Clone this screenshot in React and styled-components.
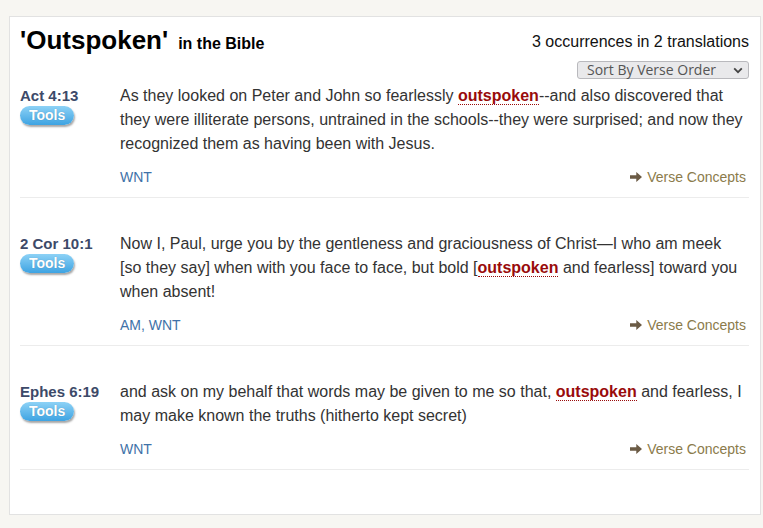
import React from "react";
import styled, { createGlobalStyle } from "styled-components";

const GlobalStyle = createGlobalStyle`
  html, body {
    margin: 0;
    padding: 0;
    background: #f7f6f2;
    font-family: "Liberation Sans", Arial, sans-serif;
  }
`;

const verses = [
  {
    ref: "Act 4:13",
    before: "As they looked on Peter and John so fearlessly ",
    after:
      "--and also discovered that they were illiterate persons, untrained in the schools--they were surprised; and now they recognized them as having been with Jesus.",
    translations: "WNT",
  },
  {
    ref: "2 Cor 10:1",
    before:
      "Now I, Paul, urge you by the gentleness and graciousness of Christ\u2014I who am meek [so they say] when with you face to face, but bold [",
    after: " and fearless] toward you when absent!",
    translations: "AM, WNT",
  },
  {
    ref: "Ephes 6:19",
    before: "and ask on my behalf that words may be given to me so that, ",
    after:
      " and fearless, I may make known the truths (hitherto kept secret)",
    translations: "WNT",
  },
];

const ArrowIcon = () => (
  <svg width="12" height="10" viewBox="0 0 12 10">
    <path d="M0 3.2h6.3V0L12 5 6.3 10V6.8H0z" fill="#6b5b45" />
  </svg>
);

const Chevron = () => (
  <svg width="10" height="7" viewBox="0 0 10 7">
    <path
      d="M1.2 1.4L5 5.2l3.8-3.8"
      fill="none"
      stroke="#444"
      strokeWidth="1.8"
    />
  </svg>
);

export default function App() {
  return (
    <Page>
      <GlobalStyle />
      <Card>
        <Header>
          <Title>
            'Outspoken'<Sub>in the Bible</Sub>
          </Title>
          <Meta>
            <Count>3 occurrences in 2 translations</Count>
            <Select>
              <span>Sort By Verse Order</span>
              <Chevron />
            </Select>
          </Meta>
        </Header>

        {verses.map((v, i) => (
          <Row key={v.ref} $first={i === 0}>
            <RefCol>
              <RefLabel>{v.ref}</RefLabel>
              <ToolsButton>Tools</ToolsButton>
            </RefCol>
            <Body>
              <VerseText>
                {v.before}
                <Hit>outspoken</Hit>
                {v.after}
              </VerseText>
              <Footer>
                <Translations>{v.translations}</Translations>
                <Concepts>
                  <ArrowIcon />
                  Verse Concepts
                </Concepts>
              </Footer>
            </Body>
          </Row>
        ))}
      </Card>
    </Page>
  );
}

const Page = styled.div`
  padding: 16px 2px 13px 9px;
`;

const Card = styled.div`
  background: #fff;
  border: 1px solid #e2e2e2;
  padding: 8px 11px 44px 10px;
`;

const Header = styled.div`
  display: flex;
  justify-content: space-between;
  align-items: flex-start;
`;

const Title = styled.h1`
  margin: 0;
  font-size: 26px;
  line-height: 30px;
  font-weight: bold;
  color: #000;
`;

const Sub = styled.span`
  font-size: 16px;
  margin-left: 10px;
`;

const Meta = styled.div`
  display: flex;
  flex-direction: column;
  align-items: flex-end;
  margin-top: 7px;
`;

const Count = styled.div`
  font-size: 16px;
  line-height: 20px;
  color: #111;
`;

const Select = styled.div`
  margin-top: 9px;
  width: 172px;
  height: 18px;
  box-sizing: border-box;
  display: flex;
  align-items: center;
  justify-content: space-between;
  padding: 0 5px 0 9px;
  background: #e9e9eb;
  border: 1px solid #b9b9bd;
  border-radius: 3px;
  font-family: "Open Sans", "Noto Sans", sans-serif;
  font-size: 14px;
  line-height: 16px;
  color: #555;
`;

const Row = styled.div`
  display: grid;
  grid-template-columns: 100px 1fr;
  padding: ${(p) => (p.$first ? "5px" : "34px")} 0 10px;
  border-bottom: 1px solid #ececec;
`;

const RefCol = styled.div`
  display: flex;
  flex-direction: column;
  align-items: flex-start;
`;

const RefLabel = styled.div`
  margin-top: 2px;
  font-size: 15px;
  line-height: 20px;
  font-weight: bold;
  color: #3d4a69;
`;

const ToolsButton = styled.div`
  height: 19px;
  line-height: 19px;
  padding: 0 9px;
  border-radius: 10px;
  background: linear-gradient(#8dd2f6, #3ea3e2);
  box-shadow: 1px 2px 2px rgba(0, 0, 0, 0.35);
  color: #fff;
  font-size: 14px;
  font-weight: bold;
  text-shadow: 0 0 1px rgba(0, 0, 0, 0.25);
`;

const Body = styled.div`
  display: flex;
  flex-direction: column;
`;

const VerseText = styled.div`
  padding-right: 5px;
  font-size: 16px;
  line-height: 24px;
  color: #333;
`;

const Hit = styled.span`
  font-weight: bold;
  color: #990b0b;
  border-bottom: 1px dotted #990b0b;
`;

const Footer = styled.div`
  margin-top: 11px;
  display: flex;
  justify-content: space-between;
  align-items: center;
  height: 20px;
  font-size: 14px;
`;

const Translations = styled.span`
  color: #3f72a8;
`;

const Concepts = styled.span`
  display: flex;
  align-items: center;
  gap: 5px;
  color: #8b7b4b;
  margin-right: 3px;
`;
